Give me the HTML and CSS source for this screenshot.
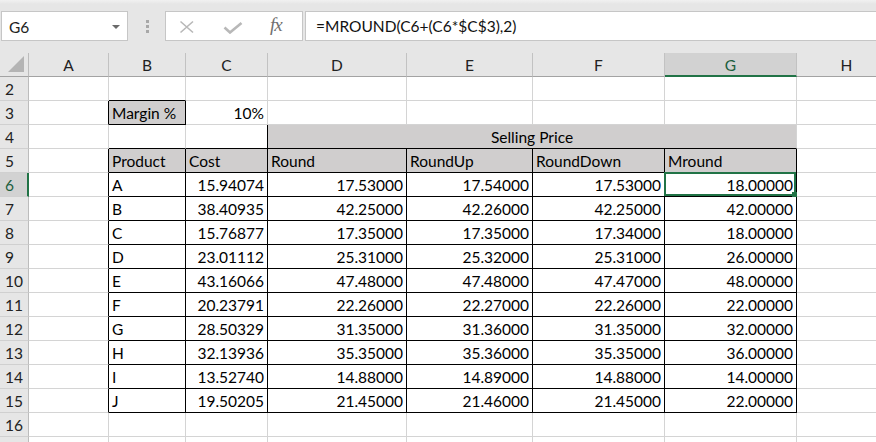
FILE: index.html
```html
<!DOCTYPE html>
<html>
<head>
<meta charset="utf-8">
<link rel="stylesheet" href="styles.css">
</head>
<body>
<div class="toolbar">
  <div class="namebox"><span class="nb-text">G6</span><span class="nb-arrow"></span></div>
  <div class="grip"><span></span><span></span><span></span></div>
  <div class="fxbox">
    <svg class="ic-x" width="16" height="14" viewBox="0 0 16 14"><path d="M1.5 1.5 L14 12.5 M14 1.5 L1.5 12.5" stroke="#b8b8b8" stroke-width="1.6" fill="none"/></svg>
    <svg class="ic-check" width="20" height="12" viewBox="0 0 20 12"><path d="M1.5 5.5 L7 10.5 L18.5 1" stroke="#b8b8b8" stroke-width="2.6" fill="none"/></svg>
    <span class="fx">fx</span>
  </div>
  <div class="formula">=MROUND(C6+(C6*$C$3),2)</div>
</div>
<div class="sheet">
  <div class="c corner"><span class="tri"></span></div>
  <div class="c hd">A</div><div class="c hd">B</div><div class="c hd">C</div><div class="c hd">D</div><div class="c hd">E</div><div class="c hd">F</div><div class="c hd sel">G</div><div class="c hd">H</div>

  <div class="c rh">2</div><div class="c"></div><div class="c bb"></div><div class="c"></div><div class="c"></div><div class="c"></div><div class="c"></div><div class="c"></div><div class="c"></div>

  <div class="c rh">3</div><div class="c br"></div><div class="c gray tb">Margin %</div><div class="c num">10%</div><div class="c"></div><div class="c"></div><div class="c"></div><div class="c"></div><div class="c"></div>

  <div class="c rh">4</div><div class="c"></div><div class="c bb"></div><div class="c bb br"></div><div class="c gray bb merged">Selling Price</div><div class="c"></div>

  <div class="c rh">5</div><div class="c br"></div><div class="c gray tb">Product</div><div class="c gray tb">Cost</div><div class="c gray tb">Round</div><div class="c gray tb">RoundUp</div><div class="c gray tb">RoundDown</div><div class="c gray tb">Mround</div><div class="c"></div>

  <div class="c rh rsel">6</div><div class="c br"></div><div class="c tb">A</div><div class="c tb num">15.94074</div><div class="c tb num">17.53000</div><div class="c tb num">17.54000</div><div class="c tb num">17.53000</div><div class="c tb num active">18.00000</div><div class="c"></div>

  <div class="c rh">7</div><div class="c br"></div><div class="c tb">B</div><div class="c tb num">38.40935</div><div class="c tb num">42.25000</div><div class="c tb num">42.26000</div><div class="c tb num">42.25000</div><div class="c tb num">42.00000</div><div class="c"></div>

  <div class="c rh">8</div><div class="c br"></div><div class="c tb">C</div><div class="c tb num">15.76877</div><div class="c tb num">17.35000</div><div class="c tb num">17.35000</div><div class="c tb num">17.34000</div><div class="c tb num">18.00000</div><div class="c"></div>

  <div class="c rh">9</div><div class="c br"></div><div class="c tb">D</div><div class="c tb num">23.01112</div><div class="c tb num">25.31000</div><div class="c tb num">25.32000</div><div class="c tb num">25.31000</div><div class="c tb num">26.00000</div><div class="c"></div>

  <div class="c rh">10</div><div class="c br"></div><div class="c tb">E</div><div class="c tb num">43.16066</div><div class="c tb num">47.48000</div><div class="c tb num">47.48000</div><div class="c tb num">47.47000</div><div class="c tb num">48.00000</div><div class="c"></div>

  <div class="c rh">11</div><div class="c br"></div><div class="c tb">F</div><div class="c tb num">20.23791</div><div class="c tb num">22.26000</div><div class="c tb num">22.27000</div><div class="c tb num">22.26000</div><div class="c tb num">22.00000</div><div class="c"></div>

  <div class="c rh">12</div><div class="c br"></div><div class="c tb">G</div><div class="c tb num">28.50329</div><div class="c tb num">31.35000</div><div class="c tb num">31.36000</div><div class="c tb num">31.35000</div><div class="c tb num">32.00000</div><div class="c"></div>

  <div class="c rh">13</div><div class="c br"></div><div class="c tb">H</div><div class="c tb num">32.13936</div><div class="c tb num">35.35000</div><div class="c tb num">35.36000</div><div class="c tb num">35.35000</div><div class="c tb num">36.00000</div><div class="c"></div>

  <div class="c rh">14</div><div class="c br"></div><div class="c tb">I</div><div class="c tb num">13.52740</div><div class="c tb num">14.88000</div><div class="c tb num">14.89000</div><div class="c tb num">14.88000</div><div class="c tb num">14.00000</div><div class="c"></div>

  <div class="c rh">15</div><div class="c br"></div><div class="c tb">J</div><div class="c tb num">19.50205</div><div class="c tb num">21.45000</div><div class="c tb num">21.46000</div><div class="c tb num">21.45000</div><div class="c tb num">22.00000</div><div class="c"></div>

  <div class="c rh">16</div><div class="c"></div><div class="c"></div><div class="c"></div><div class="c"></div><div class="c"></div><div class="c"></div><div class="c"></div><div class="c"></div>

  <div class="c rh"></div><div class="c"></div><div class="c"></div><div class="c"></div><div class="c"></div><div class="c"></div><div class="c"></div><div class="c"></div><div class="c"></div>
</div>
</body>
</html>
```

FILE: styles.css
```css
html, body {
  margin: 0;
  padding: 0;
  background: #ffffff;
  overflow: hidden;
}
body {
  width: 876px;
  height: 442px;
  font-family: Lato, "Liberation Sans", sans-serif;
  font-size: 15.5px;
  color: #000;
}
.toolbar {
  height: 53px;
  box-sizing: border-box;
  padding: 11px 0 0 1px;
  display: flex;
  align-items: flex-start;
  background: linear-gradient(#f1f1f1 0, #e6e6e6 4px, #e6e6e6 100%);
}
.namebox {
  width: 127px;
  height: 30px;
  box-sizing: border-box;
  border: 1px solid #c6c6c6;
  background: #fff;
  display: flex;
  align-items: center;
  justify-content: space-between;
  padding: 1px 7px 0 7px;
}
.nb-text {
  font-size: 15.5px;
  color: #222;
}
.nb-arrow {
  width: 0;
  height: 0;
  border-left: 4px solid transparent;
  border-right: 4px solid transparent;
  border-top: 4px solid #6a6a6a;
  margin-top: 1px;
}
.grip {
  width: 37px;
  height: 30px;
  display: flex;
  flex-direction: column;
  align-items: center;
  justify-content: center;
  gap: 2px;
  padding-left: 1px;
  box-sizing: border-box;
}
.grip span {
  width: 3px;
  height: 3px;
  background: #a8a8a8;
}
.fxbox {
  width: 138px;
  height: 30px;
  box-sizing: border-box;
  border: 1px solid #c6c6c6;
  background: #fff;
  display: flex;
  align-items: center;
  padding-left: 13px;
}
.ic-x {
  margin-top: 2px;
}
.ic-check {
  margin-left: 28px;
  margin-top: 4px;
}
.fx {
  margin-left: 27px;
  font-family: "Liberation Serif", serif;
  font-style: italic;
  font-size: 19px;
  color: #707070;
  letter-spacing: -1px;
  margin-top: -2px;
}
.formula {
  flex: 1;
  margin-left: 2px;
  height: 30px;
  box-sizing: border-box;
  border: 1px solid #c6c6c6;
  border-right: none;
  background: #fff;
  padding: 0 0 0 10px;
  line-height: 28px;
  font-size: 15.5px;
  color: #111;
}
.sheet {
  display: grid;
  grid-template-columns: 29px 80px 77px 82px 139px 126px 132px 132px 100px;
  grid-auto-rows: 24px;
}
.c {
  box-sizing: border-box;
  border-right: 1px solid #d4d4d4;
  border-bottom: 1px solid #d4d4d4;
  padding: 1px 3px 0 3px;
  line-height: 22px;
  white-space: nowrap;
  overflow: hidden;
}
.corner {
  background: #e6e6e6;
  border-right: 1px solid #bcbcbc;
  border-bottom: 1px solid #a3a3a3;
  display: flex;
  align-items: flex-end;
  justify-content: flex-end;
  padding: 0 4px 4px 0;
}
.tri {
  width: 16px;
  height: 16px;
  background: #b4b4b4;
  clip-path: polygon(100% 0, 100% 100%, 0 100%);
}
.hd {
  background: #e6e6e6;
  border-right: 1px solid #c2c2c2;
  border-bottom: 1px solid #a3a3a3;
  text-align: center;
  color: #222;
}
.hd.sel {
  background: #d2d2d2;
  border-bottom: 2px solid #217346;
  color: #1d5f3e;
}
.rh {
  background: #e6e6e6;
  border-right: 1px solid #bcbcbc;
  border-bottom: 1px solid #d0d0d0;
  padding-left: 5px;
  color: #222;
}
.rh.rsel {
  background: #d2d2d2;
  border-right: 2px solid #217346;
  color: #1d5f3e;
}
.num {
  text-align: right;
}
.gray {
  background: #d0cece;
}
.tb {
  border-right: 1px solid #000;
  border-bottom: 1px solid #000;
}
.br {
  border-right: 1px solid #000;
}
.bb {
  border-bottom: 1px solid #000;
}
.merged {
  grid-column: span 4;
  text-align: center;
}
.active {
  position: relative;
  overflow: visible;
}
.active::after {
  content: "";
  position: absolute;
  top: -1px;
  left: -1px;
  right: 0;
  bottom: 0;
  border: 2px solid #217346;
}
.active::before {
  content: "";
  position: absolute;
  right: -1px;
  bottom: -1px;
  width: 5px;
  height: 5px;
  background: #217346;
  z-index: 1;
}
```
